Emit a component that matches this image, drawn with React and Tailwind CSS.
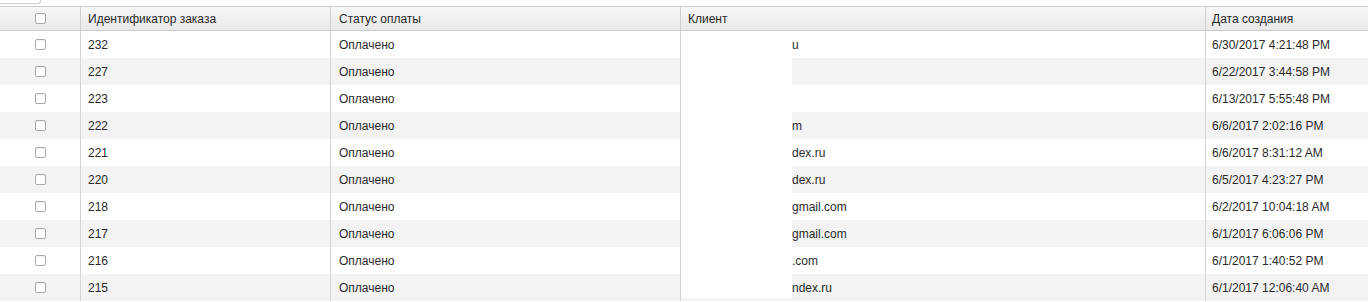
import React from "react";

const rows = [
  { id: "232", pre: "", suf: "u", date: "6/30/2017 4:21:48 PM" },
  { id: "227", pre: "", suf: "", date: "6/22/2017 3:44:58 PM" },
  { id: "223", pre: "", suf: "", date: "6/13/2017 5:55:48 PM" },
  { id: "222", pre: "", suf: "m", date: "6/6/2017 2:02:16 PM" },
  { id: "221", pre: "an", suf: "dex.ru", date: "6/6/2017 8:31:12 AM" },
  { id: "220", pre: "yan", suf: "dex.ru", date: "6/5/2017 4:23:27 PM" },
  { id: "218", pre: "@", suf: "gmail.com", date: "6/2/2017 10:04:18 AM" },
  { id: "217", pre: "@", suf: "gmail.com", date: "6/1/2017 6:06:06 PM" },
  { id: "216", pre: "", suf: ".com", date: "6/1/2017 1:40:52 PM" },
  { id: "215", pre: "ya", suf: "ndex.ru", date: "6/1/2017 12:06:40 AM" },
];

function Box() {
  return (
    <span className="block w-[11px] h-[11px] rounded-[2px] border border-[#a9a9a9] bg-white shadow-[inset_0_1px_1px_rgba(0,0,0,0.06)]" />
  );
}

export default function App() {
  return (
    <div
      className="relative w-[1368px] h-[302px] overflow-hidden bg-white text-[12px] text-[#2a2a2a]"
      style={{ fontFamily: '"Liberation Sans", Arial, Helvetica, sans-serif' }}
    >
      <div className="h-[6px]">
        <div className="w-[41px] h-[4px] border-b border-r border-[#cfcfcf] rounded-br-[3px] bg-white" />
      </div>
      <div className="grid grid-cols-[80px_250px_350px_525px_163px] h-[25px] border-t border-b border-[#cccccc] bg-gradient-to-b from-[#f7f7f7] to-[#e9e9e9] items-stretch">
        <div className="flex items-center justify-center pl-[1px]">
          <Box />
        </div>
        <div className="flex items-center border-l border-[#cfcfcf] pl-[7px]">Идентификатор заказа</div>
        <div className="flex items-center border-l border-[#cfcfcf] pl-[8px]">Статус оплаты</div>
        <div className="flex items-center border-l border-[#cfcfcf] pl-[7px]">Клиент</div>
        <div className="flex items-center border-l border-[#cfcfcf] pl-[6px]">Дата создания</div>
      </div>
      <div>
        {rows.map((r, i) => (
          <div
            key={r.id}
            className={`grid grid-cols-[80px_250px_350px_525px_163px] h-[27px] ${i % 2 === 1 ? "bg-[#f3f3f3]" : "bg-white"}`}
          >
            <div className="flex items-center justify-center pl-[1px]">
              <Box />
            </div>
            <div className="flex items-center border-l border-[#d4d4d4] pl-[7px]">{r.id}</div>
            <div className="flex items-center border-l border-[#d4d4d4] pl-[8px]">Оплачено</div>
            <div className="flex items-center border-l border-[#d4d4d4] whitespace-nowrap">
              <span className="inline-block w-[111px] text-right">{r.pre}</span>
              <span>{r.suf}</span>
            </div>
            <div className="flex items-center border-l border-[#d4d4d4] pl-[6px] whitespace-nowrap">{r.date}</div>
          </div>
        ))}
      </div>
      <div className="absolute left-[681px] top-[31px] w-[111px] h-[267px] bg-white" />
    </div>
  );
}
